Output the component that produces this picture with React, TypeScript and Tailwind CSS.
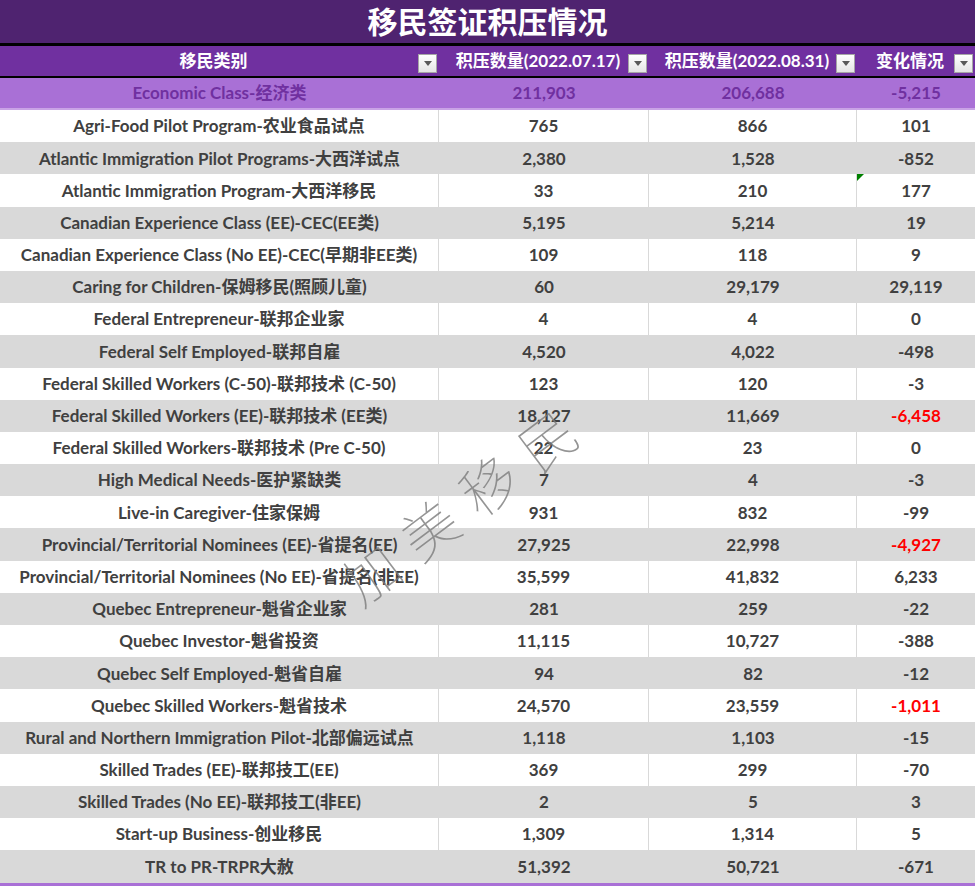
import React from 'react';

type Row = {
  name: string;
  a: string;
  b: string;
  c: string;
  red?: boolean;
};

const rows: Row[] = [
  { name: 'Agri-Food Pilot Program-农业食品试点', a: '765', b: '866', c: '101' },
  { name: 'Atlantic Immigration Pilot Programs-大西洋试点', a: '2,380', b: '1,528', c: '-852' },
  { name: 'Atlantic Immigration Program-大西洋移民', a: '33', b: '210', c: '177' },
  { name: 'Canadian Experience Class (EE)-CEC(EE类)', a: '5,195', b: '5,214', c: '19' },
  { name: 'Canadian Experience Class (No EE)-CEC(早期非EE类)', a: '109', b: '118', c: '9' },
  { name: 'Caring for Children-保姆移民(照顾儿童)', a: '60', b: '29,179', c: '29,119' },
  { name: 'Federal Entrepreneur-联邦企业家', a: '4', b: '4', c: '0' },
  { name: 'Federal Self Employed-联邦自雇', a: '4,520', b: '4,022', c: '-498' },
  { name: 'Federal Skilled Workers (C-50)-联邦技术 (C-50)', a: '123', b: '120', c: '-3' },
  { name: 'Federal Skilled Workers (EE)-联邦技术 (EE类)', a: '18,127', b: '11,669', c: '-6,458', red: true },
  { name: 'Federal Skilled Workers-联邦技术 (Pre C-50)', a: '22', b: '23', c: '0' },
  { name: 'High Medical Needs-医护紧缺类', a: '7', b: '4', c: '-3' },
  { name: 'Live-in Caregiver-住家保姆', a: '931', b: '832', c: '-99' },
  { name: 'Provincial/Territorial Nominees (EE)-省提名(EE)', a: '27,925', b: '22,998', c: '-4,927', red: true },
  { name: 'Provincial/Territorial Nominees (No EE)-省提名(非EE)', a: '35,599', b: '41,832', c: '6,233' },
  { name: 'Quebec Entrepreneur-魁省企业家', a: '281', b: '259', c: '-22' },
  { name: 'Quebec Investor-魁省投资', a: '11,115', b: '10,727', c: '-388' },
  { name: 'Quebec Self Employed-魁省自雇', a: '94', b: '82', c: '-12' },
  { name: 'Quebec Skilled Workers-魁省技术', a: '24,570', b: '23,559', c: '-1,011', red: true },
  { name: 'Rural and Northern Immigration Pilot-北部偏远试点', a: '1,118', b: '1,103', c: '-15' },
  { name: 'Skilled Trades (EE)-联邦技工(EE)', a: '369', b: '299', c: '-70' },
  { name: 'Skilled Trades (No EE)-联邦技工(非EE)', a: '2', b: '5', c: '3' },
  { name: 'Start-up Business-创业移民', a: '1,309', b: '1,314', c: '5' },
  { name: 'TR to PR-TRPR大赦', a: '51,392', b: '50,721', c: '-671' },
];

const cols = 'grid grid-cols-[439px_210px_208px_118px]';

const FilterButton: React.FC = () => (
  <span className="absolute right-[2px] top-[8px] flex h-[19px] w-[19px] items-center justify-center border border-[#a6a6a6] bg-gradient-to-b from-white to-[#e4e4e4]">
    <svg width="8" height="5" viewBox="0 0 8 5">
      <path d="M0 0h8L4 5z" fill="#595959" />
    </svg>
  </span>
);

const HeaderCell: React.FC<{ label: string }> = ({ label }) => (
  <div className="relative flex items-center justify-center pr-[12px]">
    <span>{label}</span>
    <FilterButton />
  </div>
);

const App: React.FC = () => {
  return (
    <div
      className="relative h-[886px] w-[975px] overflow-hidden bg-white"
      style={{ fontFamily: 'Lato, "Noto Sans CJK SC", sans-serif' }}
    >
      <div className="flex h-[43px] items-center justify-center bg-[#4f2370] text-[30px] font-bold text-white">
        移民签证积压情况
      </div>
      <div className="h-[3px] bg-black" />
      <div className={`${cols} h-[30px] bg-[#7030a0] text-[17px] font-bold text-white`}>
        <HeaderCell label="移民类别" />
        <HeaderCell label="积压数量(2022.07.17)" />
        <HeaderCell label="积压数量(2022.08.31)" />
        <HeaderCell label="变化情况" />
      </div>
      <div className="h-[2px] bg-black" />
      <div className={`${cols} h-[30px] items-center bg-[#a970d6] text-center text-[17px] font-bold text-[#7030a0]`}>
        <div>Economic Class-经济类</div>
        <div>211,903</div>
        <div>206,688</div>
        <div>-5,215</div>
      </div>
      <div className="h-[2px] bg-[#c9a3e6]" />
      <div className="text-[17px] font-bold text-[#404040]">
        {rows.map((r, i) => {
          const gray = i % 2 === 1;
          const sep = gray ? '' : 'border-r border-[#d9d9d9]';
          return (
            <div
              key={r.name}
              className={`${cols} h-[32.2px] items-stretch text-center ${gray ? 'bg-[#d9d9d9]' : 'bg-white'}`}
            >
              <div className={`flex items-center justify-center whitespace-nowrap ${sep}`}>{r.name}</div>
              <div className={`flex items-center justify-center ${sep}`}>{r.a}</div>
              <div className={`flex items-center justify-center ${sep}`}>{r.b}</div>
              <div className={`relative flex items-center justify-center ${r.red ? 'text-[#ff0000]' : ''}`}>
                {i === 2 && (
                  <span className="absolute left-0 top-0 h-0 w-0 border-r-[7px] border-t-[7px] border-r-transparent border-t-[#008000]" />
                )}
                {r.c}
              </div>
            </div>
          );
        })}
      </div>
      <div className="h-[4px] bg-[#a970d6]" />

      <div
        className="pointer-events-none absolute left-[285px] top-[458px] w-[360px] rotate-[-37deg] text-center text-[56px] font-thin tracking-[18px] text-[#7a7a7a]/80"
        style={{ fontFamily: '"Noto Sans CJK SC", sans-serif' }}
      >
        加美移民
      </div>
    </div>
  );
};

export default App;
